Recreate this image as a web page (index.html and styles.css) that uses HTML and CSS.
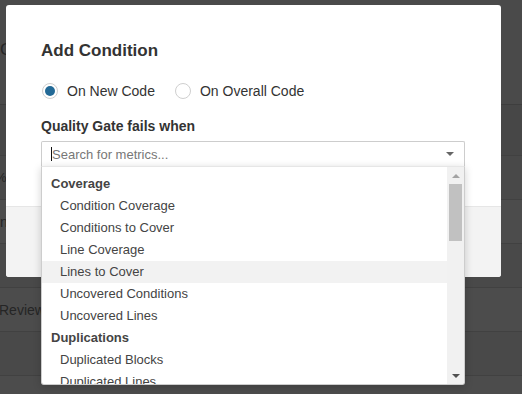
FILE: index.html
```html
<!DOCTYPE html>
<html>
<head>
<meta charset="utf-8">
<link rel="stylesheet" href="styles.css">
</head>
<body>
<div class="bg">
  <div class="bg-head"><span class="bg-title">C</span></div>
  <div class="bg-row bg-row-tall"></div>
  <div class="bg-row bg-alt"><span class="bg-text bg-pct">%</span></div>
  <div class="bg-row bg-light"><span class="bg-text">n</span></div>
  <div class="bg-row bg-alt"></div>
  <div class="bg-row bg-light"><span class="bg-text bg-review">Review</span></div>
  <div class="bg-row bg-alt"></div>
  <div class="bg-row bg-light"></div>
</div>

<div class="modal">
  <div class="modal-body">
    <h2 class="modal-title">Add Condition</h2>
    <div class="radios">
      <label class="radio-opt"><span class="radio checked"></span>On New Code</label>
      <label class="radio-opt"><span class="radio"></span>On Overall Code</label>
    </div>
    <div class="field-label">Quality Gate fails when</div>
    <div class="select">
      <div class="select-input"><span class="caret"></span><span class="placeholder">Search for metrics...</span><span class="select-arrow"></span></div>
      <div class="menu">
        <div class="menu-list">
          <div class="group">Coverage</div>
          <div class="option">Condition Coverage</div>
          <div class="option">Conditions to Cover</div>
          <div class="option">Line Coverage</div>
          <div class="option focused">Lines to Cover</div>
          <div class="option">Uncovered Conditions</div>
          <div class="option">Uncovered Lines</div>
          <div class="group">Duplications</div>
          <div class="option">Duplicated Blocks</div>
          <div class="option">Duplicated Lines</div>
        </div>
        <div class="scrollbar">
          <div class="sb-btn"><span class="sb-up"></span></div>
          <div class="sb-thumb"></div>
          <div class="sb-track"></div>
          <div class="sb-btn"><span class="sb-down"></span></div>
        </div>
      </div>
    </div>
  </div>
  <div class="modal-foot"></div>
</div>
</body>
</html>
```

FILE: styles.css
```css
* { box-sizing: border-box; }
html, body {
  margin: 0;
  padding: 0;
  width: 522px;
  height: 394px;
  overflow: hidden;
}
body {
  background: #4a4a4a;
  font-family: "Liberation Sans", Arial, sans-serif;
  position: relative;
}

/* dimmed page underneath */
.bg {
  display: flex;
  flex-direction: column;
  height: 394px;
  overflow: hidden;
}
.bg-head {
  flex: none;
  height: 104px;
  background: #4a4a4a;
  padding-top: 40px;
}
.bg-title {
  font-size: 17px;
  line-height: 20px;
  color: #262626;
  display: block;
}
.bg-row {
  flex: none;
  height: 44px;
  border-top: 1px solid #414141;
  display: flex;
  align-items: center;
}
.bg-row-tall { height: 51px; background: #474747; border-top-color: #3e3e3e; }
.bg-alt { background: #494949; }
.bg-light { background: #4c4c4c; }
.bg-text {
  font-size: 14px;
  color: #252525;
}
.bg-pct { margin-left: -5px; font-size: 13px; }
.bg-review { margin-left: -1px; }

/* modal */
.modal {
  position: absolute;
  left: 6px;
  top: 5px;
  width: 495px;
  background: #fff;
  border-radius: 3px;
  color: #333;
}
.modal-body {
  padding: 34px 36px 39px 35px;
}
.modal-title {
  margin: 0;
  font-size: 17px;
  line-height: 24px;
  font-weight: bold;
  color: #333;
}
.radios {
  margin-top: 18px;
  display: flex;
  height: 20px;
  align-items: center;
  font-size: 14px;
  color: #333;
}
.radio-opt {
  display: flex;
  align-items: center;
  margin-right: 20px;
}
.radio-opt:first-child { margin-left: 1px; }
.radio {
  width: 16px;
  height: 16px;
  border: 1px solid #cfcfcf;
  border-radius: 50%;
  margin-right: 9px;
  display: flex;
  align-items: center;
  justify-content: center;
  background: #fff;
}
.radio.checked::after {
  content: "";
  width: 10px;
  height: 10px;
  border-radius: 50%;
  background: #236a97;
}
.field-label {
  margin-top: 15px;
  font-size: 14px;
  line-height: 20px;
  font-weight: bold;
  color: #333;
}
.select {
  margin-top: 5px;
  position: relative;
}
.select-input {
  height: 26px;
  border: 1px solid #cdcdcd;
  border-bottom-color: #e6e6e6;
  border-radius: 2px 2px 0 0;
  display: flex;
  align-items: center;
  padding-left: 9px;
  font-size: 13px;
  position: relative;
}
.caret {
  width: 1px;
  height: 14px;
  background: #111;
}
.placeholder { color: #777; }
.select-arrow {
  position: absolute;
  right: 10px;
  top: 10px;
  width: 0;
  height: 0;
  border-left: 4px solid transparent;
  border-right: 4px solid transparent;
  border-top: 4px solid #666;
}

/* dropdown */
.menu {
  position: absolute;
  left: 0;
  right: 0;
  top: 25px;
  height: 219px;
  background: #fff;
  border: 1px solid #cdcdcd;
  border-top-color: #e6e6e6;
  border-radius: 0 0 3px 3px;
  box-shadow: 0 2px 8px rgba(0, 0, 0, 0.18);
  display: flex;
  overflow: hidden;
  z-index: 2;
}
.menu-list {
  flex: 1;
  padding-top: 6px;
  overflow: hidden;
  font-size: 13px;
  color: #444;
}
.group {
  height: 22px;
  line-height: 22px;
  padding-left: 9px;
  font-weight: bold;
  color: #444;
}
.option {
  height: 22px;
  line-height: 22px;
  padding-left: 18px;
  color: #444;
}
.option.focused { background: #f2f2f2; }
.scrollbar {
  width: 17px;
  background: #f1f1f1;
  display: flex;
  flex-direction: column;
}
.sb-btn {
  height: 17px;
  display: flex;
  align-items: center;
  justify-content: center;
}
.sb-up {
  width: 0; height: 0;
  border-left: 4px solid transparent;
  border-right: 4px solid transparent;
  border-bottom: 4px solid #a3a3a3;
}
.sb-down {
  width: 0; height: 0;
  border-left: 4px solid transparent;
  border-right: 4px solid transparent;
  border-top: 4px solid #505050;
}
.sb-thumb {
  height: 57px;
  margin: 0 2px;
  background: #c1c1c1;
}
.sb-track { flex: 1; }

.modal-foot {
  height: 71px;
  background: #f3f3f3;
  border-top: 1px solid #e6e6e6;
  border-radius: 0 0 3px 3px;
}
```
